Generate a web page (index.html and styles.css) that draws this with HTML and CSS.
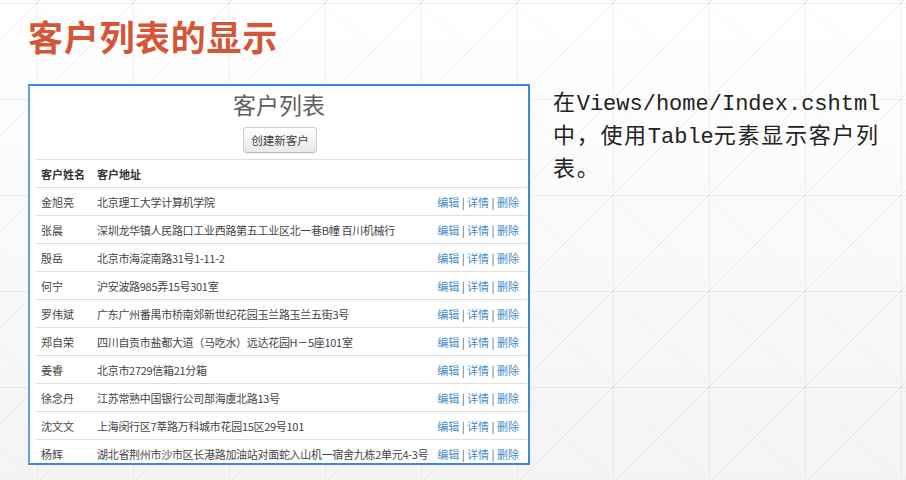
FILE: index.html
```html
<!DOCTYPE html>
<html lang="zh-CN">
<head>
<meta charset="utf-8">
<title>客户列表的显示</title>
<link rel="stylesheet" href="styles.css">
</head>
<body>
<div class="slide">
  <h1 class="slide-title">客户列表的显示</h1>
  <div class="content">
    <section class="panel">
      <h2 class="panel-title">客户列表</h2>
      <div class="actions"><button class="btn">创建新客户</button></div>
      <table class="grid">
        <thead>
          <tr><th class="c-name">客户姓名</th><th class="c-addr">客户地址</th><th class="c-ops"></th></tr>
        </thead>
        <tbody>
          <tr><td>金旭亮</td><td class="addr">北京理工大学计算机学院</td><td class="ops"><a>编辑</a> | <a>详情</a> | <a>删除</a></td></tr>
          <tr><td>张晨</td><td class="addr">深圳龙华镇人民路口工业西路第五工业区北一巷B幢 百川机械行</td><td class="ops"><a>编辑</a> | <a>详情</a> | <a>删除</a></td></tr>
          <tr><td>殷岳</td><td class="addr">北京市海淀南路31号1-11-2</td><td class="ops"><a>编辑</a> | <a>详情</a> | <a>删除</a></td></tr>
          <tr><td>何宁</td><td class="addr">沪安波路985弄15号301室</td><td class="ops"><a>编辑</a> | <a>详情</a> | <a>删除</a></td></tr>
          <tr><td>罗伟斌</td><td class="addr">广东广州番禺市桥南郊新世纪花园玉兰路玉兰五街3号</td><td class="ops"><a>编辑</a> | <a>详情</a> | <a>删除</a></td></tr>
          <tr><td>郑自荣</td><td class="addr">四川自贡市盐都大道（马吃水）远达花园H－5座101室</td><td class="ops"><a>编辑</a> | <a>详情</a> | <a>删除</a></td></tr>
          <tr><td>姜睿</td><td class="addr">北京市2729信箱21分箱</td><td class="ops"><a>编辑</a> | <a>详情</a> | <a>删除</a></td></tr>
          <tr><td>徐念丹</td><td class="addr">江苏常熟中国银行公司部海虞北路13号</td><td class="ops"><a>编辑</a> | <a>详情</a> | <a>删除</a></td></tr>
          <tr><td>沈文文</td><td class="addr">上海闵行区7莘路万科城市花园15区29号101</td><td class="ops"><a>编辑</a> | <a>详情</a> | <a>删除</a></td></tr>
          <tr><td>杨辉</td><td class="addr">湖北省荆州市沙市区长港路加油站对面蛇入山机一宿舍九栋2单元4-3号</td><td class="ops"><a>编辑</a> | <a>详情</a> | <a>删除</a></td></tr>
        </tbody>
      </table>
    </section>
    <div class="note">
      <span class="line"><span class="cj">在</span>Views/home/Index.cshtml</span>
      <span class="line"><span class="cj">中，使用</span>Table<span class="cj">元素显示客户列</span></span>
      <span class="line"><span class="cj">表。</span></span>
    </div>
  </div>
</div>
</body>
</html>
```
FILE: styles.css
```css
html, body {
  margin: 0;
  padding: 0;
}
body {
  width: 906px;
  height: 480px;
  overflow: hidden;
  font-family: "Noto Sans CJK SC", "Liberation Sans", sans-serif;
  background-color: #f7f7f7;
  background-image:
    linear-gradient(45deg, transparent calc(50% - 0.7px), rgba(0,0,0,0.05) 50%, transparent calc(50% + 0.7px)),
    linear-gradient(-45deg, transparent calc(50% - 0.7px), rgba(0,0,0,0.05) 50%, transparent calc(50% + 0.7px)),
    linear-gradient(90deg, rgba(0,0,0,0.055) 1.5px, transparent 1.5px),
    linear-gradient(180deg, rgba(0,0,0,0.055) 1.5px, transparent 1.5px),
    linear-gradient(180deg, #ffffff 0%, #f4f4f4 100%);
  background-size: 96px 96px, 96px 96px, 96px 96px, 96px 96px, 100% 100%;
  background-position: 37px 3px, 37px 3px, 37px 3px, 37px 3px, 0 0;
}
.slide {
  padding-top: 18px;
}
.slide-title {
  margin: 0 0 0 28px;
  height: 36px;
  line-height: 36px;
  font-size: 35px;
  letter-spacing: 0.7px;
  font-weight: 700;
  color: #d55636;
}
.content {
  display: flex;
  align-items: flex-start;
  margin-top: 30px;
}
.panel {
  margin-left: 28px;
  width: 502px;
  height: 381px;
  box-sizing: border-box;
  border: 2px solid #3a8ad9;
  border-left-color: #5da3e4;
  background: #fff;
}
.panel-title {
  margin: 0;
  padding-top: 3px;
  height: 30px;
  line-height: 30px;
  text-align: center;
  font-size: 23px;
  font-weight: 400;
  color: #606060;
}
.actions {
  margin-top: 7px;
  text-align: center;
  height: 26px;
  padding-left: 2px;
}
.btn {
  height: 26px;
  padding: 0 7px;
  font-family: inherit;
  font-size: 11.5px;
  color: #444;
  border: 1px solid #cfcfcf;
  border-bottom-color: #bdbdbd;
  border-radius: 4px;
  background: linear-gradient(#ffffff, #e8e8e8);
  box-shadow: 0 1px 1px rgba(0,0,0,0.05);
}
.grid {
  margin: 7px 1px 0 6px;
  width: 491px;
  table-layout: fixed;
  border-collapse: collapse;
  font-size: 11px;
  color: #444;
}
.grid th,
.grid td {
  border-top: 1px solid #dddddd;
  padding: 0 5px;
  text-align: left;
  white-space: nowrap;
  overflow: hidden;
  height: 27px;
  line-height: 16px;
}
.grid th {
  font-weight: 700;
  color: #333;
}
.grid .c-name {
  width: 46px;
}
.grid .c-ops {
  width: 84px;
}
.grid td.addr {
  letter-spacing: -0.3px;
}
.grid td.ops {
  text-align: right;
  padding-right: 8px;
  padding-left: 0;
  color: #555;
}
.ops a {
  color: #428bca;
  text-decoration: none;
}
.note {
  margin-left: 23px;
  margin-top: 2px;
  font-family: "Liberation Mono", "Noto Sans CJK SC", monospace;
  font-size: 22px;
  line-height: 28px;
  color: #222;
}
.note .line {
  display: block;
  white-space: nowrap;
}
.note .cj {
  font-family: "Noto Sans CJK SC", sans-serif;
  letter-spacing: 1.7px;
}
```
